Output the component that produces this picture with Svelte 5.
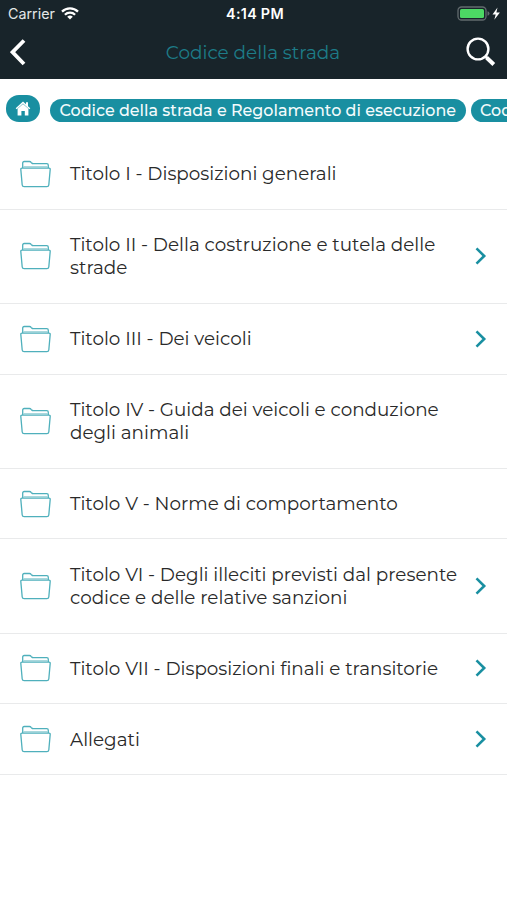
<script lang="ts">
    interface Item {
        lines: string[];
        more?: boolean;
    }

    const items: Item[] = [
        { lines: ["Titolo I - Disposizioni generali"] },
        { lines: ["Titolo II - Della costruzione e tutela delle", "strade"], more: true },
        { lines: ["Titolo III - Dei veicoli"], more: true },
        { lines: ["Titolo IV - Guida dei veicoli e conduzione", "degli animali"] },
        { lines: ["Titolo V - Norme di comportamento"] },
        {
            lines: ["Titolo VI - Degli illeciti previsti dal presente", "codice e delle relative sanzioni"],
            more: true,
        },
        { lines: ["Titolo VII - Disposizioni finali e transitorie"], more: true },
        { lines: ["Allegati"], more: true },
    ];
</script>

<div class="screen">
    <header>
        <div class="status">
            <div class="carrier">
                <span>Carrier</span>
                <svg width="18" height="13" viewBox="0 0 18 13" fill="none" stroke="#fff" stroke-width="2.3">
                    <path d="M1 4.6a11.4 11.4 0 0 1 16 0" />
                    <path d="M3.9 7.8a7.3 7.3 0 0 1 10.2 0" />
                    <path d="M9 12.6 6.2 9.8a4 4 0 0 1 5.6 0z" fill="#fff" stroke="none" />
                </svg>
            </div>
            <span class="time">4:14 PM</span>
            <svg class="battery" width="45" height="16" viewBox="0 0 45 16">
                <rect x="1" y="1" width="28" height="13" rx="3.5" fill="none" stroke="#626b6e" stroke-width="1.3" />
                <rect x="3" y="3" width="24" height="9" rx="1.5" fill="#4cd964" />
                <path d="M30.5 5.3q2 .5 2 2.2t-2 2.2z" fill="#626b6e" />
                <path d="M40.5 1.5 35.500 8.500h3.200l-1.400 5.200 5.600-7.200h-3.500z" fill="#fff" />
            </svg>
        </div>
        <nav>
            <button aria-label="Indietro">
                <svg width="16" height="27" viewBox="0 0 16 27" fill="none" stroke="#fff" stroke-width="3.800">
                    <path d="M14 1.500 2.500 13.200 14 25" />
                </svg>
            </button>
            <h1>Codice della strada</h1>
            <button aria-label="Cerca">
                <svg width="30" height="30" viewBox="0 0 30 30" fill="none" stroke="#fff">
                    <circle cx="12" cy="12" r="10.400" stroke-width="2.400" />
                    <path d="m19.400 19.400 2 2" stroke-width="2.400" />
                    <path d="m20.500 20.500 7.300 7" stroke-width="4" />
                </svg>
            </button>
        </nav>
    </header>

    <div class="crumbs">
        <a class="home" href="#home" aria-label="Home">
            <svg width="16" height="15" viewBox="0 0 16 15" fill="#fff">
                <path d="M8 .5.7 7.300l1 1L8 2.600l6.300 5.700 1-1-2.300-2.100V1.200h-2v2z" />
                <path d="M2.600 7.800 8 2.900l5.400 4.900v6.700H9.800V10H6.400v4.500H2.600z" />
            </svg>
        </a>
        <a class="pill" href="#codice">Codice della strada e Regolamento di esecuzione</a>
        <a class="pill" href="#strada">Codice della strada</a>
    </div>

    <ul>
        {#each items as item}
            <li class:tall={item.lines.length > 1}>
                <svg class="folder" width="31" height="28" viewBox="0 0 31 28">
                    <path d="M2.700 8V3q0-1.500 1.500-1.500H9.500q1 0 1.600.8l.6.700q.6.700 1.600.700H26.800q1.500 0 1.500 1.500V8" />
                    <path d="M3.200 6.700h24.600" class="faint" />
                    <path d="M2 8.200h27q1.300 0 1.200 1.200L28.800 25q-.2 1.700-1.900 1.700H4.100q-1.700 0-1.900-1.700L.8 9.400Q.7 8.200 2 8.200z" />
                </svg>
                <p>
                    {#each item.lines as line}
                        <span>{line}</span>
                    {/each}
                </p>
                {#if item.more}
                    <svg class="arrow" width="12" height="18" viewBox="0 0 12 18">
                        <path d="m1.500 1.300 7.700 7.700-7.700 7.700" />
                    </svg>
                {/if}
            </li>
        {/each}
    </ul>
</div>

<style>
    :global(body) {
        background: #fff;
    }

    .screen {
        height: 900px;
        overflow: hidden;
        font-family: Montserrat, Inter, sans-serif;
        color: #292929;
    }

    header {
        height: 79px;
        background: #18242a;
        color: #fff;
    }

    .status {
        display: grid;
        grid-template-columns: 1fr auto 1fr;
        align-items: center;
        height: 27px;
        padding: 0 5px 0 8px;
        font-family: Inter, sans-serif;
        font-size: 14.300px;
    }

    .carrier {
        display: flex;
        align-items: center;
        gap: 6px;
        color: #e4e7e8;
    }

    .time {
        font-weight: 600;
        letter-spacing: 0.300px;
    }

    .battery {
        justify-self: end;
    }

    nav {
        display: flex;
        align-items: center;
        justify-content: space-between;
        height: 50px;
        padding: 0 11px 0 10px;
    }

    button {
        display: flex;
        width: 30px;
        padding: 0;
        border: 0;
        background: none;
    }

    h1 {
        margin: 0;
        font-size: 18.450px;
        font-weight: 400;
        color: #1d7c88;
    }

    .crumbs {
        display: flex;
        align-items: flex-end;
        height: 43px;
        padding-left: 6px;
        overflow: hidden;
    }

    .home {
        display: flex;
        flex: none;
        align-items: center;
        justify-content: center;
        width: 34px;
        height: 27px;
        margin-right: 10px;
        border-radius: 13px;
        background: #198fa1;
    }

    .pill {
        flex: none;
        height: 23px;
        margin-right: 5px;
        padding: 0 9.500px;
        border-radius: 12px;
        background: #198fa1;
        color: #f4fbfc;
        font-size: 15.950px;
        font-weight: 500;
        line-height: 23px;
        text-decoration: none;
        white-space: nowrap;
    }

    ul {
        margin: 17px 0 0;
        padding: 0;
        list-style: none;
    }

    li {
        display: flex;
        align-items: center;
        box-sizing: border-box;
        height: 70.700px;
        padding: 0 20px;
        border-bottom: 1px solid #e9eaeb;
    }

    li.tall {
        height: 94.200px;
    }

    .folder {
        flex: none;
        fill: none;
        stroke: #4fb0bc;
        stroke-width: 1.300;
    }

    .faint {
        stroke: #a5d6dc;
    }

    p {
        flex: 1;
        margin: 0 0 0 19px;
        font-size: 18.350px;
        line-height: 23.300px;
        white-space: nowrap;
    }

    p span {
        display: block;
    }

    .arrow {
        flex: none;
        fill: none;
        stroke: #198fa1;
        stroke-width: 2.600;
    }
</style>
